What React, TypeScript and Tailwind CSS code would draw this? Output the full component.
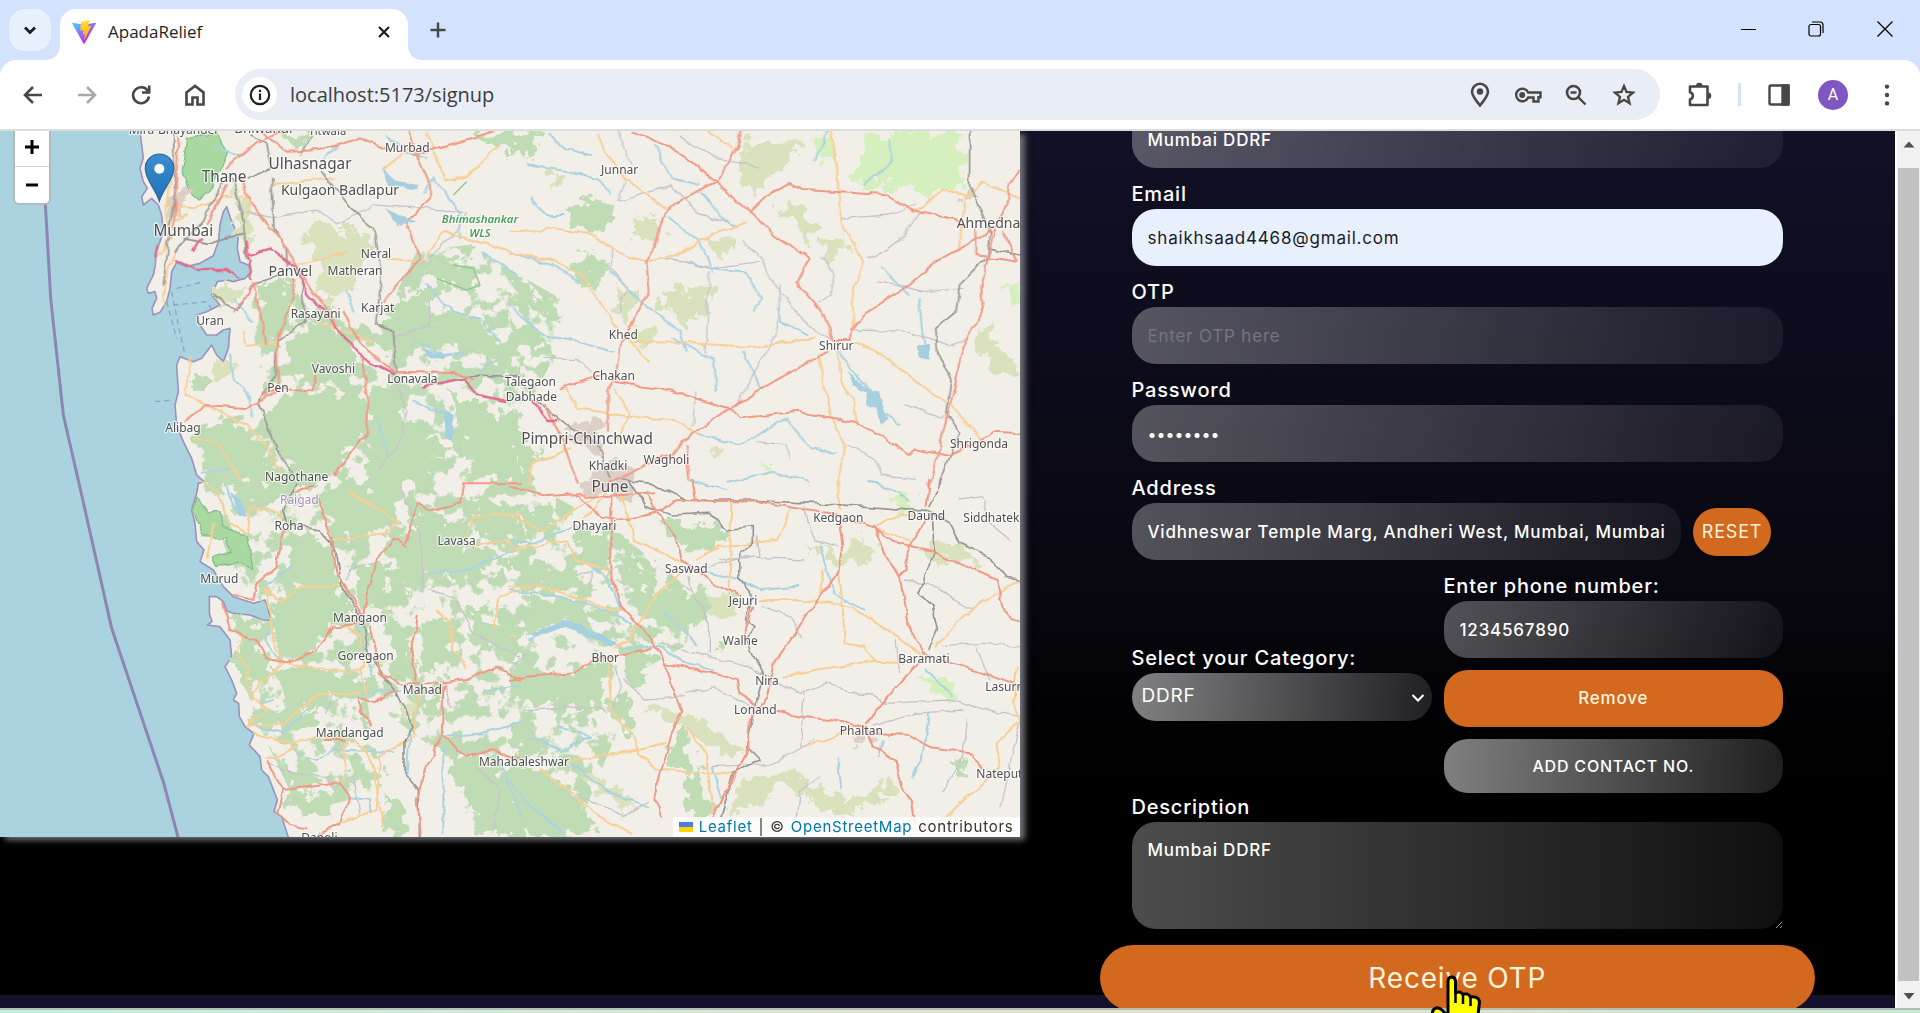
import type { ReactNode } from "react";

/* ---------- Map ---------- */

type Label = { t: string; x: number; y: number; s: number; start?: boolean; kind?: "park" | "district" };

const labels: Label[] = [
  { t: "Mira-Bhayander", x: 522, y: 15, s: 36 },
  { t: "Bhiwandi", x: 790, y: 10, s: 40 },
  { t: "Titwala", x: 982, y: 17, s: 34 },
  { t: "Murbad", x: 1222, y: 68, s: 36 },
  { t: "Ulhasnagar", x: 930, y: 115, s: 46 },
  { t: "Thane", x: 672, y: 153, s: 46 },
  { t: "Kulgaon Badlapur", x: 1020, y: 195, s: 42 },
  { t: "Mumbai", x: 550, y: 315, s: 46 },
  { t: "Bhimashankar", x: 1440, y: 282, s: 34, kind: "park" },
  { t: "WLS", x: 1440, y: 325, s: 34, kind: "park" },
  { t: "Neral", x: 1128, y: 385, s: 36 },
  { t: "Matheran", x: 1065, y: 436, s: 36 },
  { t: "Panvel", x: 871, y: 437, s: 42 },
  { t: "Rasayani", x: 947, y: 565, s: 36 },
  { t: "Karjat", x: 1133, y: 548, s: 36 },
  { t: "Uran", x: 630, y: 588, s: 36 },
  { t: "Vavoshi", x: 1000, y: 730, s: 36 },
  { t: "Lonavala", x: 1237, y: 762, s: 36 },
  { t: "Pen", x: 834, y: 787, s: 36 },
  { t: "Alibag", x: 549, y: 908, s: 36 },
  { t: "Nagothane", x: 890, y: 1055, s: 36 },
  { t: "Raigad", x: 898, y: 1125, s: 36, kind: "district" },
  { t: "Roha", x: 867, y: 1203, s: 36 },
  { t: "Lavasa", x: 1370, y: 1246, s: 36 },
  { t: "Murud", x: 658, y: 1362, s: 36 },
  { t: "Mangaon", x: 1080, y: 1477, s: 36 },
  { t: "Goregaon", x: 1097, y: 1593, s: 36 },
  { t: "Mahad", x: 1267, y: 1695, s: 36 },
  { t: "Mandangad", x: 1049, y: 1822, s: 36 },
  { t: "Dapoli", x: 958, y: 2137, s: 36 },
  { t: "Mahabaleshwar", x: 1572, y: 1910, s: 36 },
  { t: "Junnar", x: 1859, y: 135, s: 36 },
  { t: "Ahmednagar", x: 2870, y: 295, s: 42, start: true },
  { t: "Khed", x: 1870, y: 628, s: 36 },
  { t: "Shirur", x: 2509, y: 663, s: 36 },
  { t: "Chakan", x: 1841, y: 752, s: 36 },
  { t: "Talegaon", x: 1591, y: 770, s: 36 },
  { t: "Dabhade", x: 1594, y: 815, s: 36 },
  { t: "Pimpri-Chinchwad", x: 1761, y: 940, s: 46 },
  { t: "Khadki", x: 1824, y: 1022, s: 36 },
  { t: "Wagholi", x: 1999, y: 1005, s: 36 },
  { t: "Shrigonda", x: 2937, y: 957, s: 36 },
  { t: "Pune", x: 1830, y: 1085, s: 46 },
  { t: "Dhayari", x: 1783, y: 1202, s: 36 },
  { t: "Kedgaon", x: 2515, y: 1177, s: 36 },
  { t: "Daund", x: 2779, y: 1171, s: 36 },
  { t: "Siddhatek", x: 2890, y: 1177, s: 36, start: true },
  { t: "Saswad", x: 2059, y: 1331, s: 36 },
  { t: "Jejuri", x: 2229, y: 1427, s: 36 },
  { t: "Walhe", x: 2221, y: 1547, s: 36 },
  { t: "Bhor", x: 1816, y: 1597, s: 36 },
  { t: "Baramati", x: 2772, y: 1601, s: 36 },
  { t: "Nira", x: 2301, y: 1666, s: 36 },
  { t: "Lonand", x: 2266, y: 1753, s: 36 },
  { t: "Lasurne", x: 2956, y: 1685, s: 36, start: true },
  { t: "Phaltan", x: 2584, y: 1817, s: 36 },
  { t: "Natepute", x: 2929, y: 1945, s: 36, start: true },
];

const LAND =
  "M418 0 L425 60 L430 100 L420 130 L430 170 L442 190 L425 215 L430 240 L455 220 L475 240 L485 270 L490 320 L480 350 L468 380 L466 420 L460 450 L440 490 L445 505 L465 500 L470 520 L456 550 L460 570 L480 562 L500 530 L510 490 L515 440 L530 412 L560 425 L600 415 L640 392 L655 350 L660 300 L670 260 L680 245 L695 290 L715 330 L712 370 L720 410 L745 420 L755 440 L735 460 L700 470 L680 465 L652 470 L635 510 L660 540 L620 560 L590 570 L600 600 L620 630 L650 630 L670 615 L690 610 L685 670 L670 710 L650 690 L635 660 L605 700 L580 710 L540 695 L530 720 L535 800 L525 840 L530 900 L550 950 L575 1000 L590 1050 L612 1070 L595 1075 L590 1105 L575 1155 L585 1195 L590 1250 L612 1275 L600 1310 L640 1335 L670 1385 L700 1415 L760 1435 L795 1425 L815 1487 L790 1485 L750 1470 L700 1465 L680 1458 L670 1430 L650 1415 L628 1415 L628 1465 L636 1490 L622 1500 L660 1505 L690 1545 L695 1595 L675 1625 L695 1665 L710 1705 L700 1725 L716 1735 L718 1775 L735 1805 L762 1825 L748 1860 L780 1895 L785 1935 L805 1955 L832 2025 L822 2060 L845 2075 L866 2140 L3070 2140 L3070 0 Z";

const NW = "translate(0 0)";
const NE = "translate(1530 0) scale(1.0137 1)";
const SW = "translate(0 1065)";
const SE = "translate(1530 1065) scale(1.0137 1)";

const tiles = [
  {
    at: NW,
    wood: "M775 480 L860 455 L882 510 L860 600 L830 640 L795 640 L768 560Z M915 610 L980 600 L1050 650 L1080 720 L990 780 L900 760 L850 690Z M575 735 L635 760 L625 820 L580 790Z M800 850 L850 800 L1070 800 L1100 850 L1085 940 L1030 1010 L960 1080 L890 1080 L850 980 L800 910Z M570 930 L700 880 L790 960 L850 1060 L830 1080 L640 1080 L610 1000Z M1200 520 L1290 480 L1290 600 L1400 560 L1540 680 L1560 760 L1440 690 L1300 660 L1200 700 L1130 640Z M1110 800 L1180 800 L1220 900 L1330 960 L1280 1080 L1110 1080Z M1340 790 L1450 850 L1560 870 L1560 1080 L1420 1060 L1380 900Z M1290 440 L1360 410 L1440 440 L1450 480 L1400 500 L1320 470Z M860 20 L920 20 L910 60 L870 60Z M1430 20 L1530 20 L1530 60 L1450 70Z M1380 350 L1420 360 L1410 400 L1380 390Z",
    scrub: "M930 270 L1010 310 L1080 320 L1110 370 L1060 480 L1000 530 L940 490 L970 420 L920 360Z M700 190 L740 240 L760 340 L730 350 L700 260Z M630 480 L700 475 L740 500 L690 540 L650 530Z M640 710 L700 700 L690 760 L640 750Z",
    water: "M690 690 L700 760 L750 820 L760 880 M1150 130 L1180 170 L1250 190 M1160 30 L1210 80 L1280 100 M1280 480 L1360 560 L1440 580 L1500 650 M1240 640 L1330 690 L1400 680 M1240 830 L1340 870 L1350 940 M700 520 L760 590 M1040 500 L1060 560 M1440 740 L1500 700 M610 1040 L700 1030 M640 60 L720 90 M960 120 L1010 60 M1270 200 L1300 160 L1380 260 L1380 340 M1450 380 L1560 460 M1130 880 L1170 1000",
    gray: "M520 18 L525 200 L505 330 L490 480 M750 30 L800 55 L815 130 L745 165 M815 160 L822 310 L858 370 L862 420 M965 140 L1050 250 L1120 310 L1145 430 L1130 600 L1180 620 L1190 740 M700 160 L730 290 L740 400 M940 30 L900 90 M905 470 L915 590 L830 650 L825 750 L775 830 L830 970 L880 1050 M1270 785 L1420 750 L1560 755 M670 170 L610 290 L520 380 M640 510 L710 560 L760 475 L840 450 M550 340 L620 355 L730 325",
    border: "M730 260 L810 280 L950 255 L1010 300 L1120 240 L1400 260 L1370 320 L1260 420 M1290 530 L1290 600 L1180 640 L1180 740 L1220 860 L1200 960 L1140 1030",
    yellow: "M495 240 L580 250 L650 230 M480 390 L510 340 L495 260 L520 120 M490 540 L500 440 L530 370 M540 240 L520 290 L560 270 M820 180 L1000 160 M900 420 L1040 380 M1280 30 L1340 170 L1400 150 L1500 60 M1150 130 L1200 90 L1240 60 M1150 400 L1260 410 L1330 320 L1540 380 M560 810 L660 860 L740 900 L790 950 L850 1060 M580 940 L650 950 L720 1060 M730 620 L740 660 L830 650 M570 700 L560 810 M950 590 L1120 650 M650 210 L750 215 L740 265",
    red: "M535 40 L520 330 M680 130 L760 60 L840 18 M780 18 L860 80 L960 75 L1080 40 L1170 75 M1230 20 L1250 90 L1290 180 L1290 220 L1220 290 L1260 400 L1150 530 M720 150 L760 250 L840 340 L900 440 L1010 600 M680 180 L620 300 M880 465 L880 520 L830 650 L835 790 L790 810 M830 790 L940 800 L950 750 M1030 555 L1070 640 L1180 740 L1370 745 L1420 760 M1085 700 L1105 830 L1100 930 L1000 1050 M550 890 L620 840 L740 850 L830 800 M1240 90 L1480 20 M760 470 L795 655 M700 560 L770 470",
    pink: "M525 405 L590 435 L680 435 L715 460 M740 350 L755 460 M750 390 L810 370 L890 430 L920 500 L1010 610 L1090 700 L1180 745 M1270 785 L1390 760 L1430 810 L1520 828 M475 365 L468 400 M580 375 L600 340",
  },
  {
    at: NE,
    wood: "M0 30 L70 20 L85 70 L0 110Z M175 240 L250 210 L300 260 L290 330 L180 300Z M200 400 L260 370 L290 440 L240 490 L190 460Z M0 480 L60 490 L150 560 L140 590 L60 560Z M0 570 L60 640 L140 700 L90 700 L10 640Z M0 860 L30 860 L40 890 L0 890Z M0 960 L60 960 L100 1010 L30 1040Z",
    scrub: "M700 60 L860 50 L860 90 L780 130 L740 220 L690 190 L670 110Z M780 230 L850 240 L910 290 L900 350 L820 290Z M450 500 L600 480 L590 540 L540 580 L530 620 L450 550Z M320 480 L380 500 L350 600 L310 550Z M930 340 L1010 350 L970 420 L920 390Z M590 340 L650 350 L640 400 L590 370Z M120 140 L160 150 L150 190 L120 180Z M1400 600 L1510 740 L1460 760 L1380 640Z M370 280 L440 270 L440 340 L370 330Z M350 620 L440 620 L440 650 L370 660Z M590 965 L630 970 L620 1000 L590 995Z",
    meadow: "M1050 40 L1180 18 L1320 20 L1350 60 L1340 180 L1250 210 L1180 170 L1130 190 L1020 180Z M890 30 L960 40 L970 100 L920 110Z M1460 480 L1510 470 L1510 540 L1460 530Z M730 1000 L790 1010 L780 1040 L740 1040Z",
    water: "M120 30 L160 70 L240 90 M50 120 L180 140 L260 160 L300 210 M430 60 L450 110 L480 160 L560 180 M570 200 L620 270 L660 300 M60 220 L110 270 L160 270 M0 380 L120 420 L210 470 M460 400 L600 430 L700 440 L740 520 L720 560 M470 280 L560 350 L600 440 M300 440 L400 540 L500 620 L520 680 M0 540 L100 630 L200 650 L300 680 M480 640 L600 700 L610 800 M690 680 L720 740 L740 790 M790 550 L800 590 L880 630 M980 680 L1010 740 L1060 790 L1110 860 L1150 900 M1210 520 L1220 620 L1230 680 M560 930 L680 960 L820 880 L890 970 L960 980 M640 1070 L780 1040 L880 1070 M940 20 L900 110 M1120 40 L1130 110 L1050 180 M1100 430 L1180 510",
    gray: "M1360 20 L1360 180 L1420 320 L1410 400 L1330 480 L1320 560 L1260 610 L1265 680 L1305 770 L1290 860 L1330 920 L1300 1000 L1270 1080 M1420 370 L1510 390 M80 830 L180 910 L260 960 L295 1060",
    border: "M500 30 L540 60 L620 100 L740 130 M320 20 L360 120 M340 170 L320 230 L480 180 L560 270 L680 300 M690 350 L750 400 L770 460 L880 600 L950 640 M590 440 L580 680 M800 480 L790 620 L670 840 M470 400 L590 430 L740 410 M980 280 L1120 270 L1200 240 M1060 400 L1150 350 L1220 260 M920 400 L960 440 L950 510 L910 530 M1010 610 L1180 620 L1300 660 L1350 640 M550 800 L540 900 M730 950 L820 960 L830 1000 M990 960 L1080 1000 L1100 1050 L1200 1060 M1170 840 L1280 880 L1300 850 M1090 470 L1230 500 L1340 490 M100 700 L200 700 L240 740 M300 370 L300 430 L350 490 L320 560",
    yellow: "M260 30 L280 80 L340 160 L460 250 M0 320 L40 320 L130 310 L250 330 L310 380 L400 410 L490 390 L600 330 L700 290 M950 20 L975 200 L980 290 L1045 410 L1015 490 L1015 610 M1200 260 L1280 195 L1360 210 L1400 170 L1510 220 M355 650 L540 655 L700 665 L900 640 M0 380 L130 410 L210 450 L320 610 M970 650 L980 770 L1020 830 L1030 900 M910 690 L950 870 L990 960 L970 1080 M1020 650 L1100 690 L1240 800 L1310 840 L1390 940 M1350 210 L1325 370 M170 790 L200 850 L380 880 L500 890 L560 930 M310 790 L350 860 L320 950 M60 1080 L60 1020 L180 970 M340 630 L410 710 M590 20 L660 70",
    red: "M360 20 L450 55 L540 110 L610 170 L710 260 L780 330 L890 400 L850 475 L930 570 L955 645 L1005 645 L1010 610 L1060 560 L1180 480 L1260 410 L1420 320 M610 170 L480 240 L460 260 L440 340 L400 410 L410 500 L350 620 M610 170 L670 70 L690 20 M710 260 L760 210 L830 175 L870 195 L1110 210 L1200 260 L1330 285 M1510 140 L1475 180 L1470 240 L1430 320 L1395 490 L1400 560 L1350 640 L1300 850 L1270 970 L1240 1080 M350 620 L320 680 L310 750 L290 800 L290 920 M310 770 L480 800 L650 850 L680 880 L850 860 L1020 890 L1110 940 L1180 990 L1200 970 L1300 990 L1360 960 L1430 920 L1510 925 M940 680 L780 770 L650 850 L510 950 L480 990 L420 1010 L290 1080 M150 790 L210 770 L260 755 M100 840 L160 950 L200 1080 M1380 310 L1380 390 L1500 410 L1460 320 M520 960 L530 1060",
    pink: "M60 820 L110 885 L135 885",
  },
  {
    at: SW,
    wood: "M700 0 L880 0 L900 60 L830 80 L720 60Z M990 20 L1200 10 L1200 60 L1170 160 L1000 180 L960 60Z M880 190 L980 180 L1010 250 L1020 330 L1070 400 L1010 440 L960 470 L900 540 L860 540 L820 430 L830 350 L920 320 L850 280Z M830 560 L920 560 L1060 590 L1140 610 L1070 640 L960 650 L880 700 L850 650Z M680 400 L800 430 L760 470 L720 470Z M700 500 L790 520 L820 590 L740 620 L700 560Z M1060 260 L1150 260 L1150 370 L1080 390Z M1260 110 L1400 120 L1400 200 L1550 240 L1480 260 L1350 300 L1270 280 L1200 350 L1160 200Z M1400 60 L1560 90 L1560 200 L1440 170Z M1290 600 L1320 640 L1310 710 L1270 700Z M740 700 L850 700 L830 740 L750 740Z M870 700 L960 670 L960 740 L870 770Z M1140 930 L1200 980 L1240 1070 L1170 1060Z M1330 820 L1420 830 L1560 890 L1560 1070 L1430 1070 L1440 960 L1370 910Z M1060 860 L1150 880 L1140 910 L1040 900Z M850 860 L980 890 L960 920 L860 910Z M850 940 L1020 950 L980 1010 L890 1000Z M1380 380 L1450 420 L1560 450 L1540 560 L1440 480Z M1160 420 L1220 450 L1240 580 L1180 540Z M1270 420 L1370 430 L1340 540 L1260 590Z",
    scrub: "M1200 650 L1260 660 L1240 720 L1200 700Z",
    water: "M680 20 L700 80 L740 110 M820 440 L790 480 L830 530 M1070 440 L1080 490 L1120 580 M890 820 L950 840 L1000 810 L1180 820 M1320 180 L1400 200 L1500 180 L1560 200 M1290 280 L1400 270 L1520 220 M780 670 L820 660 M1340 770 L1440 760 L1560 730 M1040 950 L1110 960 L1110 1000 M870 260 L800 320 M1230 750 L1220 880 M1330 800 L1330 1060 M1080 640 L1200 630 M1450 630 L1560 620 M1500 850 L1560 1000 M770 740 L850 760 L920 690",
    gray: "M890 10 L850 90 L860 130 L960 150 L1010 220 L1025 320 L1090 420 L1105 520 L1160 600 L1190 640 L1240 740 L1215 780 L1215 880 L1255 930 L1255 1070",
    border: "M1200 20 L1260 160 L1270 320 L1370 360 L1420 460 L1560 530 M1040 300 L1060 260 L1120 250 M980 700 L1000 640 M1330 600 L1350 680 M1430 860 L1500 930 L1480 1060 M800 850 L870 880 L980 890 L1000 920 M1060 880 L1080 1000",
    yellow: "M600 0 L650 30 L690 130 L740 160 L750 80 L830 90 L850 110 M640 130 L620 240 M1000 185 L1150 160 L1200 130 L1050 40 M790 330 L850 360 L900 320 L1020 320 M800 340 L820 480 L850 550 L750 640 L800 690 L740 740 L850 730 L960 640 L1080 640 M730 470 L710 520 L740 570 L750 640 M860 550 L1050 580 L1090 560 L1080 470 L1040 440 M760 760 L880 790 L960 770 L1040 780 L1030 900 M1260 640 L1240 770 L1140 830 L1130 990 L1020 1030 M1400 160 L1420 110 L1560 100 M1310 390 L1350 430 L1360 510 L1400 560 M800 840 L890 800 M1060 780 L1110 830 L1150 1040 M1380 200 L1520 180 L1560 220 M1480 450 L1500 350 L1560 330 M1100 640 L1080 570",
    red: "M960 60 L990 160 L1010 280 L1085 400 M850 150 L830 260 L770 310 L760 360 L700 345 M670 370 L690 450 L770 480 L800 540 L860 550 L950 510 L1000 440 L1080 430 M1090 400 L1130 240 L1180 175 L1220 200 M1110 440 L1140 580 L1200 610 L1330 610 L1400 600 L1490 560 L1560 600 M1250 410 L1235 500 L1250 600 M1330 620 L1325 770 L1280 860 L1250 960 L1260 1070 M1330 770 L1400 830 L1480 810 L1560 840 M1190 630 L1120 670 L1075 650 L1080 690 L1115 740 M850 930 L1020 910 L1050 950 L1020 1030 L960 1060 M800 850 L850 930 L835 1000 L870 1035 L920 1045 M1220 190 L1250 70 L1290 90 L1380 70 L1390 10 L1560 10 M890 30 L940 20 M970 780 L1030 780",
    pink: "",
  },
  {
    at: SE,
    wood: "M20 90 L100 70 L140 120 L90 170 L20 130Z M190 180 L290 160 L290 230 L200 240Z M310 140 L360 180 L360 230 L310 220Z M340 260 L440 270 L420 320 L350 340 L310 290Z M450 120 L620 150 L650 180 L570 210 L480 180Z M0 230 L110 260 L190 280 L250 340 L130 330 L0 280Z M60 330 L300 400 L280 430 L160 420 L60 470 L40 380Z M400 350 L490 330 L590 340 L580 430 L490 460 L420 430 L370 410Z M310 480 L440 520 L400 560 L380 620 L340 580Z M0 560 L80 580 L230 580 L290 620 L270 690 L180 670 L100 680 L0 640Z M340 660 L390 720 L370 770 L320 740Z M480 760 L520 750 L540 820 L530 870 L470 860Z M510 880 L570 870 L560 930 L610 990 L570 1030 L520 950Z M0 860 L90 870 L190 940 L250 1030 L250 1070 L90 1070 L0 960Z M600 490 L640 480 L640 530 L600 530Z M1320 840 L1350 860 L1340 900 L1320 890Z M0 740 L80 760 L100 820 L20 830Z",
    scrub: "M570 350 L650 350 L670 410 L610 430Z M400 680 L540 700 L630 770 L690 800 L660 840 L560 780Z M930 230 L1050 180 L1100 200 L1060 240 L960 260Z M700 880 L860 890 L1000 970 L1120 890 L1140 930 L1000 1010 L900 980 L820 910 L750 970 L640 1010Z M1210 200 L1290 180 L1400 230 L1350 250 L1260 240Z M870 190 L920 200 L900 230Z M210 880 L330 920 L380 1000 L300 960Z",
    meadow: "M1130 60 L1200 50 L1210 90 L1150 90Z M1200 600 L1270 590 L1330 650 L1280 650Z",
    water: "M0 180 L60 190 L140 160 L180 140 M230 250 L290 300 L330 390 M0 330 L150 350 L280 390 L360 430 M60 480 L180 430 L310 490 M460 400 L550 490 M560 270 L680 300 L740 330 L850 320 M330 500 L440 500 L520 550 L600 570 M140 740 L240 770 L150 810 L60 770 M180 850 L280 930 L410 980 M970 840 L980 920 M600 860 L630 960 M920 200 L960 340 L1050 390 M1230 570 L1310 650 M1240 700 L1220 830 L1190 890 M0 900 L60 980 L160 1060 M1100 780 L1090 830 M530 0 L640 30 M1060 0 L1130 30 L1180 60",
    gray: "M330 0 L420 10 L520 60 L700 60 L900 70 L1060 80 L1240 95 L1300 130 L1330 190 L1420 230 L1470 295 L1510 300 M350 0 L400 80 L480 105 L590 100 L640 150 L720 140 L720 190 L680 220 L680 300 L720 350 L700 420 L725 440 L700 480 L750 590 L720 700 L700 800 L740 840 L660 880 L625 1010 M1250 100 L1255 220 L1210 340 L1250 380 L1265 450 L1240 510 M1240 80 L1280 0",
    border: "M200 290 L240 270 L240 330 M530 290 L540 340 L590 430 L590 520 M440 490 L600 530 L700 560 L860 640 L950 610 L1000 640 L1070 645 L1110 670 L1300 660 L1400 690 L1510 710 M730 170 L740 230 L620 240 M590 260 L700 230 L870 240 M750 380 L830 410 L860 470 M870 640 L860 800 M0 560 L50 520 M310 560 L330 620 L300 690 L160 680 L40 690 M520 640 L600 620 L720 680 M340 600 L400 660 L520 650 M1170 300 L1240 310 L1370 390 M1140 480 L1150 580 M1280 500 L1400 490 L1510 500 M1380 500 L1420 600 M1070 740 L1200 700 L1340 690 M600 860 L780 850 L900 780 M1350 720 L1340 830 L1280 940 M1510 720 L1480 850 L1450 980 M870 80 L900 180 L970 200 M1330 60 L1400 50 L1420 130 L1480 180 M200 940 L340 1010 L410 960 M850 1010 L860 930 L920 890",
    yellow: "M0 110 L100 150 L240 60 M0 210 L170 180 L190 240 L290 270 M280 40 L220 120 M330 50 L370 180 L520 250 M550 240 L620 200 L790 180 L830 90 M655 60 L650 330 M740 360 L890 360 L1010 380 L1130 460 L1210 520 M970 0 L975 90 M975 280 L985 380 L990 490 L1050 500 L1080 545 L1160 550 M810 590 L900 570 L1080 545 M930 270 L920 340 M1260 500 L1340 410 L1440 340 L1510 300 M0 320 L100 320 L300 390 L340 390 M0 470 L20 470 M500 280 L430 350 L350 480 L310 500 M290 550 L300 690 L370 780 L380 820 M180 840 L270 830 L460 790 M380 820 L440 870 L660 880 M520 740 L580 820 L600 1000 M870 800 L990 760 M1500 560 L1490 660 L1510 720 L1440 790 L1450 860 L1280 1020 M90 870 L180 940 L280 1020 L360 1060 M1080 140 L1110 120 L1190 105 M1090 150 L1180 180",
    red: "M0 20 L110 45 L200 40 L240 50 L430 40 M190 40 L270 110 L350 120 L450 90 L480 65 M300 50 L300 290 L330 380 L420 480 L460 560 L510 690 L480 760 L440 900 L430 960 L450 1010 M400 40 L450 120 L490 170 L510 240 L600 310 L680 345 M480 60 L740 65 L960 105 L1080 145 L1130 185 L1240 210 L1440 300 L1465 400 L1510 425 M975 130 L985 210 L970 280 L900 370 L830 480 L780 550 L760 650 L710 720 L700 820 L600 1010 M1080 140 L1110 220 L1160 310 L1180 440 L1220 520 L1400 580 L1510 620 M1230 120 L1180 200 L1170 270 L1150 290 M1210 550 L1110 660 L1050 730 M790 695 L860 710 L950 720 L1050 740 L1080 800 L1140 840 L1160 920 L1190 970 L1200 1030 M1090 760 L1180 765 L1240 800 L1360 820 L1400 860 M0 600 L50 590 L190 580 L250 540 L420 505 M460 550 L600 580 L670 600 L680 640 L725 670 M720 380 L690 470 M1240 0 L1230 80 M540 0 L550 60",
    pink: "",
  },
];

function MapCanvas() {
  return (
    <svg
      className="block h-full w-full"
      viewBox="0 18 3060 2118"
      preserveAspectRatio="xMinYMin slice"
      role="img"
      aria-label="Map of Maharashtra"
    >
      <defs>
        <filter id="rough" x="-5%" y="-5%" width="110%" height="110%" colorInterpolationFilters="sRGB">
          <feTurbulence type="fractalNoise" baseFrequency="0.022" numOctaves="4" seed="4" />
          <feDisplacementMap in="SourceGraphic" scale="95" xChannelSelector="R" yChannelSelector="G" />
        </filter>
        <filter id="wiggle" x="-5%" y="-5%" width="110%" height="110%" colorInterpolationFilters="sRGB">
          <feTurbulence type="fractalNoise" baseFrequency="0.022" numOctaves="2" seed="9" />
          <feDisplacementMap in="SourceGraphic" scale="20" xChannelSelector="R" yChannelSelector="G" />
        </filter>
        <filter id="patches" x="0" y="0" width="100%" height="100%" colorInterpolationFilters="sRGB">
          <feTurbulence type="fractalNoise" baseFrequency="0.018" numOctaves="5" seed="12" />
          <feColorMatrix values="0 0 0 0 0.75  0 0 0 0 0.86  0 0 0 0 0.71  14 0 0 0 -6.9" />
          <feComposite in2="SourceGraphic" operator="in" />
        </filter>
        <linearGradient id="pin" x1="0" y1="0" x2="0" y2="1">
          <stop offset="0" stopColor="#3d8fd1" />
          <stop offset="1" stopColor="#1f6fb4" />
        </linearGradient>
      </defs>
      <rect width="3070" height="2150" fill="#aad3df" />
      <path d={LAND} fill="#f2efe9" stroke="#9a95bd" strokeWidth="5" strokeLinejoin="round" />
      <path
        d="M760 620 L900 480 L1130 620 L1250 380 L1400 360 L1680 520 L1650 720 L1520 960 L1640 1100 L1850 1220 L2080 1400 L2060 1560 L1900 1650 L1860 1800 L1720 2140 L1420 2140 L1340 1900 L1100 1720 L1150 2000 L900 2060 L780 1810 L720 1640 L720 1520 L830 1480 L700 1340 L610 1080 L600 900 L800 850Z"
        fill="#bddbb3"
        filter="url(#patches)"
      />
      {tiles.map((t) => (
        <g key={t.at} transform={t.at}>
          <path d={t.meadow} fill="#d5efbf" filter="url(#rough)" />
          <path d={t.scrub} fill="#d9e2bd" filter="url(#rough)" />
          <path d={t.wood} fill="#bfdcb5" filter="url(#rough)" />
        </g>
      ))}
      <g fill="#a9d8a0" stroke="#83c08a" strokeWidth="4" filter="url(#wiggle)">
        <path d="M560 40 L600 30 L650 30 L682 80 L675 110 L650 150 L640 180 L600 228 L570 200 L545 130 L555 80Z" />
        <path d="M590 1115 L625 1160 L660 1160 L665 1205 L740 1235 L755 1330 L720 1310 L650 1325 L635 1300 L690 1280 L680 1240 L610 1235 L580 1160Z" />
      </g>
      <g fill="none" stroke="#8cc592" strokeWidth="4">
        <path d="M1360 420 L1420 430 L1440 480 L1400 495 L1310 460 M1360 210 L1400 170" />
      </g>
      <g fill="#dccfc6" filter="url(#rough)">
        <path d="M500 170 L560 190 L545 280 L500 290Z M1720 880 L1800 900 L1810 980 L1700 960Z M1790 1010 L1900 1020 L1890 1130 L1760 1100Z M2890 200 L2930 190 L2930 220 L2890 220Z M2560 1825 L2620 1825 L2600 1850Z" />
      </g>
      <g fill="none" strokeLinejoin="round" strokeLinecap="round" filter="url(#wiggle)">
        {tiles.map((t) => (
          <g key={t.at} transform={t.at}>
            <path d={t.water} stroke="#acd4e0" strokeWidth="6" />
            <path d={t.border} stroke="#c6c5cb" strokeWidth="4" />
            <path d={t.yellow} stroke="#f8cf94" strokeWidth="6" />
            <path d={t.gray} stroke="#9a9795" strokeWidth="5" />
            <path d={t.red} stroke="#f19a86" strokeWidth="6" />
            <path d={t.pink} stroke="#e46d8d" strokeWidth="7" />
          </g>
        ))}
      </g>
      <g fill="#a6cfe0" filter="url(#wiggle)">
        <path d="M2540 740 L2575 770 L2610 795 L2640 800 L2650 840 L2665 880 L2645 900 L2625 850 L2600 850 L2595 800 L2560 780Z" />
        <path d="M2750 660 L2790 660 L2790 700 L2760 700Z" />
        <path d="M1590 1530 L1700 1482 L1760 1510 L1850 1550 L1830 1565 L1700 1505 L1600 1540Z" />
        <path d="M1150 250 L1200 270 L1250 290 L1190 300Z M1150 130 L1180 170 L1260 180 L1240 195 L1160 180Z" />
        <path d="M1330 860 L1360 870 L1360 950 L1340 940Z M1270 670 L1340 690 L1330 700 L1280 690Z" />
        <path d="M690 1100 L720 1170 L740 1180 L720 1120Z" />
      </g>
      <g fill="none" stroke="#8f9fd6" strokeWidth="4" strokeDasharray="16 12">
        <path d="M515 500 L535 600 L555 690 M530 490 L610 470 M520 540 L620 530 L640 560 M500 530 L530 640 M465 830 L510 826" />
      </g>
      <g fill="none" stroke="#8d86b4" strokeWidth="9" strokeLinejoin="round">
        <path d="M134 200 L152 520 L190 870 L245 1110 L335 1510 L490 1970 L535 2140" />
      </g>
      <g fontFamily="'Noto Sans', sans-serif" stroke="#ffffff" strokeOpacity=".7" strokeWidth="7" strokeLinejoin="round" paintOrder="stroke">
        {labels.map((l) => (
          <text
            key={l.t}
            x={l.x}
            y={l.y + Math.round(l.s * 0.36)}
            fontSize={l.s}
            textAnchor={l.start ? "start" : "middle"}
            fontStyle={l.kind === "park" ? "italic" : undefined}
            fontWeight={l.kind === "park" ? 600 : 400}
            fill={l.kind === "park" ? "#48a257" : l.kind === "district" ? "#b08fb8" : "#505050"}
          >
            {l.t}
          </text>
        ))}
      </g>
      <path
        d="M478 228 C466 190 436 165 436 130 A42 42 0 0 1 521 130 C521 165 490 190 478 228Z"
        fill="url(#pin)"
        stroke="#2a6ca5"
        strokeWidth="4"
      />
      <circle cx="478" cy="131" r="15" fill="#fff" />
    </svg>
  );
}

function MapPanel() {
  return (
    <section className="relative h-[706px] w-[53.8%] shrink-0 shadow-[5px_3px_6px_0px_#707078]">
      <div className="h-full w-full overflow-hidden">
        <MapCanvas />
      </div>
      <div className="absolute -top-1.5 left-[13px] flex w-[38px] flex-col overflow-hidden rounded-md border-2 border-gray-500/50 bg-white">
        <button type="button" aria-label="Zoom in" className="flex h-10 items-center justify-center border-b border-gray-300">
          <svg width="14" height="14" viewBox="0 0 14 14" stroke="#000" strokeWidth="3">
            <path d="M7 0V14M0 7H14" />
          </svg>
        </button>
        <button type="button" aria-label="Zoom out" className="flex h-9 items-center justify-center">
          <svg width="12" height="4" viewBox="0 0 12 4" stroke="#000" strokeWidth="3">
            <path d="M0 2H12" />
          </svg>
        </button>
      </div>
      <div className="absolute right-0 bottom-0 flex h-5 items-center gap-1.5 bg-white/80 px-1.5 text-[15px] leading-5 tracking-wider text-[#333]">
        <svg width="14" height="10" viewBox="0 0 14 10" aria-hidden="true">
          <path fill="#4c7be1" d="M0 0h14v5H0z" />
          <path fill="#ffd500" d="M0 5h14v5H0z" />
        </svg>
        <a href="#leaflet" className="text-[#0078a8]">Leaflet</a>
        <span>|</span>
        <span>©</span>
        <a href="#osm" className="text-[#0078a8]">OpenStreetMap</a>
        <span>contributors</span>
      </div>
    </section>
  );
}

/* ---------- Sign-up form ---------- */

const fieldBox =
  "h-[57px] w-full rounded-3xl bg-linear-to-r from-white/30 to-white/6 px-4 text-[17px] font-medium text-white outline-none placeholder:font-normal placeholder:text-[#75757f]";
const labelText = "block text-[20px] leading-[29px] font-medium text-white";

function Field({ id, label, children }: { id: string; label: string; children: ReactNode }) {
  return (
    <div className="w-full">
      <label htmlFor={id} className={labelText}>
        {label}
      </label>
      {children}
    </div>
  );
}

function SignupForm() {
  return (
    <form className="-mt-5 flex flex-1 flex-col px-20 tracking-wider" onSubmit={(e) => e.preventDefault()}>
      <div className="flex flex-col px-8">
        <div className="flex flex-col gap-3">
          <input aria-label="Name" className={fieldBox} defaultValue="Mumbai DDRF" />
          <Field id="email" label="Email">
            <input
              id="email"
              type="email"
              defaultValue="shaikhsaad4468@gmail.com"
              className="h-[57px] w-full rounded-3xl bg-[#e8f0fe] px-4 text-[17px] text-[#1b1b28] outline-none"
            />
          </Field>
          <Field id="otp" label="OTP">
            <input id="otp" className={fieldBox} placeholder="Enter OTP here" />
          </Field>
          <Field id="password" label="Password">
            <input
              id="password"
              type="password"
              className="h-[57px] w-full rounded-3xl bg-linear-to-r from-white/30 to-white/6 px-4 text-[16px] tracking-normal text-white outline-none"
              defaultValue="12345678"
            />
          </Field>
          <Field id="address" label="Address">
            <div className="flex items-center gap-3 pr-3">
              <input
                id="address"
                className={fieldBox}
                defaultValue="Vidhneswar Temple Marg, Andheri West, Mumbai, Mumbai Suburban"
              />
              <button type="button" className="h-12 w-[78px] shrink-0 rounded-3xl bg-[#d2691e] text-[18px] text-[#fff3dc]">
                RESET
              </button>
            </div>
          </Field>
          <div className="flex items-center gap-3">
            <div className="w-[300px] shrink-0">
              <label htmlFor="category" className={labelText}>
                Select your Category:
              </label>
              <div className="relative">
                <select
                  id="category"
                  defaultValue="DDRF"
                  className="block h-12 w-full appearance-none rounded-3xl bg-linear-to-r from-white/50 to-white/12 px-2.5 pb-0.5 text-[19px] text-white outline-none"
                >
                  <option value="DDRF">DDRF</option>
                </select>
                <svg
                  className="pointer-events-none absolute top-5 right-[7px]"
                  width="14"
                  height="10"
                  viewBox="0 0 14 10"
                  fill="none"
                  stroke="#fff"
                  strokeWidth="2"
                >
                  <path d="M1.500 2L7 7.500L12.500 2" />
                </svg>
              </div>
            </div>
            <div className="flex flex-1 flex-col gap-3">
              <Field id="phone" label="Enter phone number:">
                <input id="phone" className={fieldBox} defaultValue="1234567890" />
              </Field>
              <button type="button" className="h-[57px] w-full rounded-3xl bg-[#d2691e] text-[17px] font-medium text-[#fff3dc]">
                Remove
              </button>
              <button
                type="button"
                className="h-[54px] w-full rounded-3xl bg-linear-to-r from-white/50 to-white/12 text-[16px] font-medium text-white"
              >
                ADD CONTACT NO.
              </button>
            </div>
          </div>
        </div>
        <label htmlFor="description" className={labelText}>
          Description
        </label>
        <textarea
          id="description"
          className="block h-[107px] w-full resize rounded-3xl bg-linear-to-r from-white/30 to-white/6 p-4 text-[17px] leading-6 font-medium text-white outline-none"
          defaultValue="Mumbai DDRF"
        />
      </div>
      <button type="submit" className="mt-4 h-[66px] w-full shrink-0 rounded-full bg-[#d2691e] text-[28px] text-[#fff3dc]">
        Receive OTP
      </button>
    </form>
  );
}

/* ---------- Browser frame ---------- */

function ToolButton({ label, children }: { label: string; children: ReactNode }) {
  return (
    <button type="button" aria-label={label} className="flex h-9 w-9 items-center justify-center text-[#474747]">
      {children}
    </button>
  );
}

const line = { fill: "none", stroke: "currentColor", strokeWidth: 2.6 } as const;

function TabStrip() {
  return (
    <header className="flex h-[60px] shrink-0 bg-[#d3e2fd]">
      <button type="button" aria-label="Search tabs" className="mt-[9px] ml-[9px] flex h-[42px] w-[42px] items-center justify-center rounded-2xl bg-[#e9f1fe]">
        <svg width="12" height="9" viewBox="0 0 12 9" fill="none" stroke="#1f1f1f" strokeWidth="2.800">
          <path d="M1 1.500L6 6.500L11 1.500" />
        </svg>
      </button>
      <div className="relative mt-[9px] ml-[9px] flex w-[348px] items-center rounded-t-2xl bg-white pr-3 pl-3">
        <svg className="absolute bottom-0 -left-3.5" width="14" height="14" viewBox="0 0 14 14" fill="#fff">
          <path d="M14 0V14H0A14 14 0 0 0 14 0Z" />
        </svg>
        <svg className="absolute -right-3.5 bottom-0" width="14" height="14" viewBox="0 0 14 14" fill="#fff">
          <path d="M0 0V14H14A14 14 0 0 1 0 0Z" />
        </svg>
        <div className="flex flex-1 items-center gap-3 pb-1.5">
          <svg width="24" height="24" viewBox="0 0 256 257" aria-hidden="true">
            <defs>
              <linearGradient id="va" x1="-.8%" x2="57.600%" y1="7.700%" y2="78.400%">
                <stop offset="0" stopColor="#41d1ff" />
                <stop offset="1" stopColor="#bd34fe" />
              </linearGradient>
              <linearGradient id="vb" x1="43.400%" x2="50.300%" y1="2.200%" y2="89%">
                <stop offset="0" stopColor="#ffea83" />
                <stop offset=".083" stopColor="#ffdd35" />
                <stop offset="1" stopColor="#ffa800" />
              </linearGradient>
            </defs>
            <path fill="url(#va)" d="M255.153 37.938 134.897 252.976c-2.483 4.440-8.862 4.466-11.382.048L.875 37.958c-2.746-4.814 1.371-10.646 6.827-9.670l120.385 21.517a6.537 6.537 0 0 0 2.322-.004l117.867-21.483c5.438-.991 9.574 4.796 6.877 9.620Z" />
            <path fill="url(#vb)" d="M185.432.063 96.440 17.501a3.268 3.268 0 0 0-2.634 3.014l-5.474 92.456a3.268 3.268 0 0 0 3.997 3.378l24.777-5.718c2.318-.535 4.413 1.507 3.936 3.838l-7.361 36.047c-.495 2.426 1.782 4.500 4.151 3.780l15.304-4.649c2.372-.720 4.652 1.360 4.150 3.788l-11.698 56.621c-.732 3.542 3.979 5.473 5.943 2.437l1.313-2.028 72.516-144.720c1.215-2.423-.880-5.186-3.540-4.672l-25.505 4.922c-2.396.462-4.435-1.770-3.759-4.114l16.646-57.705c.677-2.350-1.370-4.583-3.769-4.113Z" />
          </svg>
          <span className="flex-1 font-['Open_Sans','Noto_Sans',sans-serif] text-[17px] text-[#1f1f1f]">ApadaRelief</span>
          <button type="button" aria-label="Close tab" className="flex h-6 w-6 items-center justify-center">
            <svg width="12" height="12" viewBox="0 0 12 12" stroke="#1f1f1f" strokeWidth="2.200">
              <path d="M1 1L11 11M11 1L1 11" />
            </svg>
          </button>
        </div>
      </div>
      <button type="button" aria-label="New tab" className="ml-[18px] flex h-[60px] w-6 items-center justify-center">
        <svg width="16" height="16" viewBox="0 0 16 16" stroke="#474747" strokeWidth="2.400">
          <path d="M8 0.500V15.500M0.500 8H15.500" />
        </svg>
      </button>
      <div className="ml-auto flex h-[58px] items-center">
        <button type="button" aria-label="Minimize" className="flex h-full w-[68px] items-center justify-center">
          <svg width="15" height="15" viewBox="0 0 15 15" stroke="#000" shapeRendering="crispEdges">
            <path d="M0 7.500H15" />
          </svg>
        </button>
        <button type="button" aria-label="Restore" className="flex h-full w-[68px] items-center justify-center">
          <svg width="16" height="16" viewBox="0 0 16 16" fill="none" stroke="#000" strokeWidth="1.200">
            <rect x="1" y="3.500" width="11.500" height="11.500" rx="2" />
            <path d="M4 1H12A3 3 0 0 1 15 4V12" />
          </svg>
        </button>
        <button type="button" aria-label="Close" className="flex h-full w-[70px] items-center justify-center">
          <svg width="16" height="16" viewBox="0 0 16 16" stroke="#000" strokeWidth="1.300">
            <path d="M0.500 0.500L15.500 15.500M15.500 0.500L0.500 15.500" />
          </svg>
        </button>
      </div>
    </header>
  );
}

function Toolbar() {
  return (
    <div className="bg-[#d3e2fd]">
      <div className="flex h-[71px] items-center rounded-t-2xl border-b-2 border-[#dcdddd] bg-white pr-[15px] pl-[15px]">
        <div className="flex gap-[18px]">
          <ToolButton label="Back">
            <svg width="20" height="18" viewBox="0 0 20 18" {...line}>
              <path d="M19 9H2.500M10 1L2 9L10 17" />
            </svg>
          </ToolButton>
          <button type="button" aria-label="Forward" className="flex h-9 w-9 items-center justify-center text-[#a9a9a9]">
            <svg width="20" height="18" viewBox="0 0 20 18" {...line}>
              <path d="M1 9H17.500M10 1L18 9L10 17" />
            </svg>
          </button>
          <ToolButton label="Reload">
            <svg width="20" height="20" viewBox="0 0 20 20" {...line}>
              <path d="M17.200 6.500A8 8 0 1 0 18 11.500" />
              <path d="M18.200 0.500V7.500H11" />
            </svg>
          </ToolButton>
          <ToolButton label="Home">
            <svg width="20" height="22" viewBox="0 0 20 22" {...line}>
              <path d="M1.500 8.500L10 2L18.500 8.500V20.500H12.500V13.500H7.500V20.500H1.500Z" />
            </svg>
          </ToolButton>
        </div>
        <div className="ml-[22px] flex h-[51px] flex-1 items-center rounded-full bg-[#e9edf6] pr-[18px] pl-[7px]">
          <button type="button" aria-label="Site information" className="flex h-[35px] w-[35px] items-center justify-center rounded-full bg-white text-[#1f1f1f]">
            <svg width="22" height="22" viewBox="0 0 22 22" {...line} strokeWidth="2.200">
              <circle cx="11" cy="11" r="9.200" />
              <path d="M11 9.500V16M11 5.800V8" />
            </svg>
          </button>
          <input
            aria-label="Address bar"
            defaultValue="localhost:5173/signup"
            className="ml-[13px] min-w-0 flex-1 bg-transparent font-['Open_Sans','Noto_Sans',sans-serif] text-[20px] text-[#3c3d42] outline-none"
          />
          <div className="flex gap-3">
            <ToolButton label="Location">
              <svg width="20" height="26" viewBox="0 0 20 26" {...line}>
                <path d="M10 23.500C5 17.500 2 13.500 2 9.800A8 8 0 0 1 18 9.800C18 13.500 15 17.500 10 23.500Z" />
                <circle cx="10" cy="9.500" r="3.200" fill="currentColor" stroke="none" />
              </svg>
            </ToolButton>
            <ToolButton label="Passwords">
              <svg width="28" height="18" viewBox="0 0 28 18" {...line} strokeWidth="2.400">
                <path d="M14.200 6.500H26.500V11.200H24.500V15.500H19.500V11.500H14.200A6.300 6.300 0 1 1 14.200 6.500Z" />
                <circle cx="8.200" cy="9" r="3" fill="currentColor" stroke="none" />
              </svg>
            </ToolButton>
            <ToolButton label="Zoom">
              <svg width="22" height="22" viewBox="0 0 22 22" {...line}>
                <circle cx="8.500" cy="8.500" r="6.500" />
                <path d="M13.200 13.200L20.500 20.500M5.500 8.500H11.500" strokeWidth="2.400" />
              </svg>
            </ToolButton>
            <ToolButton label="Bookmark">
              <svg width="24" height="23" viewBox="0 0 24 23" {...line} strokeWidth="2.300">
                <path d="M12 3L14.500 9L21 9.600L16 13.800L17.600 20.200L12 16.800L6.400 20.200L8 13.800L3 9.600L9.500 9Z" />
              </svg>
            </ToolButton>
          </div>
        </div>
        <div className="ml-[22px] flex items-center">
          <ToolButton label="Extensions">
            <svg width="26" height="26" viewBox="0 0 26 26" {...line}>
              <path d="M3 4.500H20.500V23H3V17.500C6.800 16.500 6.800 11.200 3 10.200Z" strokeLinejoin="round" />
              <path d="M9 4A3.300 3.300 0 0 1 15.600 4ZM21 10.500A3.300 3.300 0 0 1 21 17.100Z" fill="currentColor" stroke="none" />
            </svg>
          </ToolButton>
          <span className="mx-5 h-[23px] w-[3px] bg-[#d3e2fd]" />
          <ToolButton label="Side panel">
            <svg width="22" height="22" viewBox="0 0 22 22" {...line} strokeWidth="2.400">
              <rect x="1.500" y="1.500" width="19" height="19" rx="1.500" />
              <path d="M14.500 1.500H20.500V20.500H14.500Z" fill="currentColor" />
            </svg>
          </ToolButton>
          <button type="button" aria-label="Profile" className="ml-[21px] flex h-[30px] w-[30px] items-center justify-center rounded-full bg-[#7e57c2] font-['Roboto',sans-serif] text-[16px] text-white">
            A
          </button>
          <button type="button" aria-label="Menu" className="ml-[21px] flex h-9 w-9 items-center justify-center text-[#474747]">
            <svg width="6" height="22" viewBox="0 0 6 22" fill="currentColor">
              <circle cx="3" cy="2.600" r="2.200" />
              <circle cx="3" cy="11" r="2.200" />
              <circle cx="3" cy="19.400" r="2.200" />
            </svg>
          </button>
        </div>
      </div>
    </div>
  );
}

function Scrollbar() {
  return (
    <div className="flex w-[25px] shrink-0 flex-col items-center border-l-2 border-white bg-[#f1f1f1]">
      <svg className="mt-2.5 mb-5 shrink-0" width="12" height="7" viewBox="0 0 12 7" fill="#505050">
        <path d="M0.500 6.500L6 0.500L11.500 6.500Z" />
      </svg>
      <div className="w-[21px] flex-1 bg-[#c1c1c1]" />
      <svg className="mt-3 mb-2 shrink-0" width="12" height="7" viewBox="0 0 12 7" fill="#505050">
        <path d="M0.500 0L6 6.500L11.500 0Z" />
      </svg>
    </div>
  );
}

function HandCursor() {
  return (
    <svg className="pointer-events-none absolute bottom-0 left-[1429px]" width="54" height="38" viewBox="0 0 54 38">
      <path
        d="M19 40V6C19 0.500 26 0.500 26.500 6V18C30 16 33 17.500 34 19.500C37 18 40 19.500 41.500 22C45 21 50 22.500 50.500 27L49 40Z"
        fill="#ffff00"
        stroke="#000"
        strokeWidth="3"
        strokeLinejoin="round"
      />
      <path d="M26.500 16V28M34 19V29M41.500 22V31" stroke="#000" strokeWidth="2.500" />
      <path d="M4 40C2 33 9 31 13 35L20 42" fill="#ffff00" stroke="#000" strokeWidth="3" />
    </svg>
  );
}

export default function App() {
  return (
    <div className="relative flex h-screen flex-col overflow-hidden font-['Inter','Noto_Sans',sans-serif]">
      <TabStrip />
      <Toolbar />
      <div className="flex min-h-0 flex-1">
        <main className="flex flex-1 flex-col overflow-hidden bg-[#14112b]">
          <div className="flex h-[864px] shrink-0 bg-linear-to-b from-[#111026] via-[#08070f] via-55% to-black to-85%">
            <MapPanel />
            <SignupForm />
          </div>
        </main>
        <Scrollbar />
      </div>
      <footer className="h-[5px] shrink-0 border-t-2 border-[#b3bdb8] bg-linear-to-r from-[#bdf3de] via-[#eadfc8] via-65% to-[#c4ecd0]" />
      <HandCursor />
    </div>
  );
}
